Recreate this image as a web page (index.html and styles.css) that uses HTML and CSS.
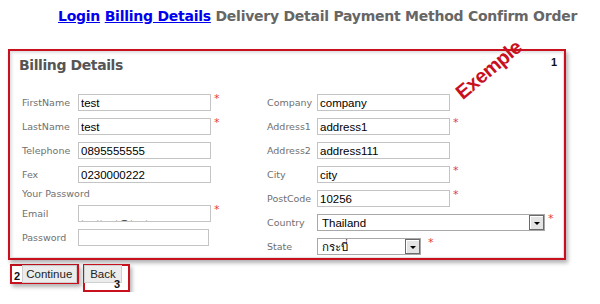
FILE: index.html
```html
<!DOCTYPE html>
<html lang="en">
<head>
    <meta charset="UTF-8">
    <title>Billing Details</title>
    <link rel="stylesheet" href="styles.css">
</head>
<body>
    <div class="steps">
        <a href="#">Login</a> <a href="#">Billing Details</a> Delivery Detail Payment Method Confirm Order
    </div>

    <div class="note-box">
        <span class="note-num one">1</span>
        <span class="stamp">Exemple</span>
        <div class="panel">
            <div class="panel-title">Billing Details</div>
            <div class="columns">
                <div class="col left">
                    <div class="row"><label>FirstName</label><input class="field" value="test"><span class="req">*</span></div>
                    <div class="row"><label>LastName</label><input class="field" value="test"><span class="req">*</span></div>
                    <div class="row"><label>Telephone</label><input class="field" value="0895555555"></div>
                    <div class="row"><label>Fex</label><input class="field" value="0230000222"></div>
                    <div class="row text-row"><label class="wide">Your Password</label></div>
                    <div class="row"><label>Email</label><div class="field email"><span>testtest@test.com</span></div><span class="req">*</span></div>
                    <div class="row"><label>Password</label><input class="field short" type="password"></div>
                </div>
                <div class="col right">
                    <div class="row"><label>Company</label><input class="field" value="company"></div>
                    <div class="row"><label>Address1</label><input class="field" value="address1"><span class="req">*</span></div>
                    <div class="row"><label>Address2</label><input class="field" value="address111"></div>
                    <div class="row"><label>City</label><input class="field" value="city"><span class="req">*</span></div>
                    <div class="row"><label>PostCode</label><input class="field" value="10256"><span class="req">*</span></div>
                    <div class="row"><label>Country</label>
                        <div class="select country"><span>Thailand</span><i class="drop"></i></div><span class="req">*</span>
                    </div>
                    <div class="row"><label>State</label>
                        <div class="select state"><span>กระบี่</span><i class="drop"></i></div><span class="req far">*</span>
                    </div>
                </div>
            </div>
        </div>
    </div>

    <div class="actions">
        <div class="note-btn first">
            <span class="note-num">2</span>
            <button class="btn">Continue</button>
        </div>
        <div class="note-btn second">
            <button class="btn">Back</button>
            <span class="note-num three">3</span>
        </div>
    </div>
</body>
</html>
```

FILE: styles.css
```css
body {
    margin: 0;
    background: #fff;
    font-family: 'DejaVu Sans', sans-serif;
    color: #777;
}
.steps {
    height: 49px;
    box-sizing: border-box;
    padding: 8px 0 0 58px;
    font-size: 14px;
    font-weight: bold;
    letter-spacing: -0.25px;
    color: #666;
    white-space: nowrap;
}
.steps a {
    color: #0000ee;
}
.note-box {
    position: relative;
    margin-left: 8px;
    width: 558px;
    height: 211px;
    box-sizing: border-box;
    border: 2px solid #c8101e;
    box-shadow: 2px 3px 4px rgba(0,0,0,0.3);
}
.panel {
    height: 100%;
    box-sizing: border-box;
    border: 1px solid #e2e2e2;
    box-shadow: inset 1px 1px 3px rgba(0,0,0,0.12);
    padding: 4px 8px 0 8px;
}
.panel-title {
    font-size: 14px;
    font-weight: bold;
    letter-spacing: -0.4px;
    color: #555;
    line-height: 18px;
    margin-bottom: 20px;
}
.columns {
    display: flex;
    padding-left: 3px;
}
.col {
    display: flex;
    flex-direction: column;
    gap: 7px;
}
.col.left {
    width: 245px;
}
.row {
    display: flex;
    align-items: flex-start;
    height: 17px;
}
.row label {
    font-size: 9.5px;
    line-height: 17px;
    width: 56px;
    flex: none;
    white-space: nowrap;
    color: #707070;
}
.right .row label {
    width: 50px;
}
.text-row {
    height: 8px;
}
.text-row label {
    line-height: 8px;
}
.field {
    width: 133px;
    height: 17px;
    box-sizing: border-box;
    margin: 0;
    padding: 0 2px;
    border: 1px solid #c4c4c4;
    font-family: 'Liberation Sans', sans-serif;
    font-size: 11.5px;
    color: #000;
    outline: none;
}
.field.short {
    width: 131px;
}
.field.email {
    overflow: hidden;
    color: #333;
    line-height: 13px;
    padding-top: 12px;
    white-space: nowrap;
}
.req {
    color: #e23c3c;
    font-size: 11px;
    line-height: 9px;
    margin-left: 3px;
}
.req.far {
    margin-left: 7px;
}
.select {
    display: flex;
    align-items: center;
    justify-content: space-between;
    height: 17px;
    box-sizing: border-box;
    border: 1px solid #a8a8a8;
    font-family: 'Liberation Sans', sans-serif;
    font-size: 11.5px;
    color: #000;
    padding-left: 4px;
}
.select.country {
    width: 228px;
}
.select.state {
    width: 104px;
}
.drop {
    width: 15px;
    height: 15px;
    box-sizing: border-box;
    border: 1px solid #6a6a6a;
    background: #e4e4e4;
    box-shadow: inset 1px 1px 0 #fff;
    display: flex;
    align-items: center;
    justify-content: center;
}
.drop::after {
    content: "";
    border-left: 3px solid transparent;
    border-right: 3px solid transparent;
    border-top: 3px solid #000;
    margin-top: 1px;
}
.note-num {
    font-family: 'Liberation Sans', sans-serif;
    font-size: 11px;
    font-weight: bold;
    color: #111;
}
.note-num.one {
    position: absolute;
    top: 5px;
    right: 7px;
}
.stamp {
    position: absolute;
    left: 456px;
    top: 30px;
    font-family: 'Liberation Sans', sans-serif;
    font-size: 20px;
    font-weight: bold;
    letter-spacing: -0.5px;
    color: #c8101e;
    transform: rotate(-40deg);
    transform-origin: left bottom;
}
.actions {
    display: flex;
    align-items: flex-start;
    padding-left: 10px;
    margin-top: 4px;
    gap: 4px;
}
.note-btn {
    display: flex;
    border: 2px solid #c8101e;
    box-shadow: 2px 3px 4px rgba(0,0,0,0.3);
}
.note-btn.first {
    width: 69px;
    height: 20px;
    box-sizing: border-box;
    align-items: flex-start;
}
.note-btn.first .note-num {
    margin: 4px 0 0 2px;
    width: 8px;
}
.note-btn.second {
    position: relative;
    width: 47px;
    height: 28px;
    box-sizing: border-box;
}
.note-btn.second .btn {
    margin: -1px 0 0 -1px;
    width: 38px;
}
.three {
    position: absolute;
    right: 8px;
    bottom: 1px;
    line-height: 10px;
}
.btn {
    height: 18px;
    margin: -1px 0 0 0;
    padding: 0 3px;
    border: 1px solid #d0d0d0;
    background: #ececec;
    font-family: 'Liberation Sans', sans-serif;
    font-size: 11.5px;
    color: #222;
    line-height: 16px;
}
.first .btn {
    width: 58px;
}
```
